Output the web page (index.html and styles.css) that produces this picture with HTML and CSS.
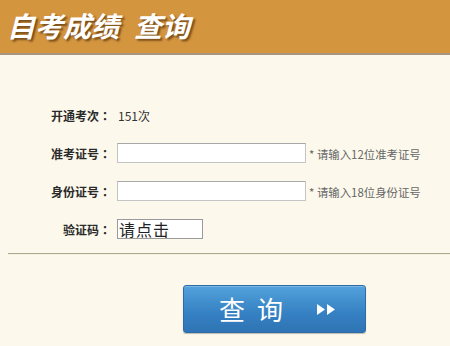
FILE: index.html
```html
<!DOCTYPE html>
<html lang="zh">
<head>
<meta charset="utf-8">
<title>自考成绩 查询</title>
<link rel="stylesheet" href="styles.css">
</head>
<body>
<header class="top">
  <h1 class="title"><span>自考成绩</span><span class="title-b">查询</span></h1>
</header>
<main class="form">
  <div class="row">
    <span class="label">开通考次<span class="colon">：</span></span>
    <span class="value">151次</span>
  </div>
  <div class="row">
    <span class="label">准考证号<span class="colon">：</span></span>
    <input class="field" type="text">
    <span class="hint">* 请输入12位准考证号</span>
  </div>
  <div class="row">
    <span class="label">身份证号<span class="colon">：</span></span>
    <input class="field" type="text">
    <span class="hint">* 请输入18位身份证号</span>
  </div>
  <div class="row">
    <span class="label">验证码<span class="colon">：</span></span>
    <span class="captcha">请点击</span>
  </div>
</main>
<hr class="divider">
<div class="actions">
  <button class="submit" type="button">
    <span class="btn-text">查</span>
    <span class="btn-text">询</span>
    <svg class="arrows" width="19" height="11" viewBox="0 0 19 11"><polygon points="0,0 8,5.5 0,11" fill="#fff"/><polygon points="10,0 18,5.5 10,11" fill="#fff"/></svg>
  </button>
</div>
</body>
</html>
```
FILE: styles.css
```css
html, body {
  margin: 0;
  padding: 0;
}
body {
  background: #fcf9ec;
  font-family: "Noto Sans CJK SC", "Liberation Sans", sans-serif;
  width: 450px;
  height: 346px;
  overflow: hidden;
}
.top {
  box-sizing: border-box;
  height: 55px;
  background: #d4953f;
  border-bottom: 2px solid #a89480;
  display: flex;
  align-items: center;
  padding: 0 0 4px 7px;
}
.title {
  margin: 0;
  font-size: 28px;
  font-weight: 700;
  font-style: italic;
  color: #fff;
  line-height: 1;
  display: flex;
  text-shadow: 2px 2px 2px rgba(60, 30, 0, 0.6);
}
.title-b {
  margin-left: 15px;
}
.form {
  padding-top: 50px;
  display: flex;
  flex-direction: column;
  row-gap: 18px;
}
.row {
  height: 20px;
  display: flex;
  align-items: center;
}
.label {
  width: 111px;
  text-align: right;
  font-size: 12px;
  font-weight: 700;
  color: #2a2a2a;
  margin-right: 6px;
  white-space: nowrap;
}
.colon {
  display: inline-block;
  width: 12px;
  text-align: center;
  font-family: "Noto Sans CJK TC", sans-serif;
}
.value {
  font-size: 12px;
  color: #333;
  margin-left: 1px;
}
.field {
  box-sizing: border-box;
  width: 189px;
  height: 20px;
  margin: 0;
  padding: 0 2px;
  border: 1px solid #c4c4c4;
  border-top-color: #a8a8a8;
  background: #fff;
}
.hint {
  font-size: 12px;
  color: #666;
  margin-left: 3px;
  white-space: nowrap;
  transform: scale(0.95);
  transform-origin: left center;
}
.captcha {
  box-sizing: border-box;
  width: 86px;
  height: 20px;
  border: 1px solid #9a9a9a;
  background: #fff;
  font-size: 16px;
  line-height: 18px;
  color: #222;
  padding-left: 1px;
  letter-spacing: 1px;
}
.divider {
  margin: 14px 0 0 8px;
  height: 0;
  border: none;
  border-top: 1px solid #aaa891;
  border-bottom: 1px solid #f4f1e0;
}
.actions {
  padding-top: 30px;
  padding-left: 183px;
}
.submit {
  box-sizing: border-box;
  width: 183px;
  height: 48px;
  border: 1px solid #2d6ca8;
  border-radius: 3px;
  background: linear-gradient(#53a2dc, #3580c2 60%, #2f74b4);
  box-shadow: inset 0 1px 0 rgba(255,255,255,0.25), 0 1px 1px rgba(0,0,0,0.25);
  display: flex;
  align-items: center;
  padding: 0 0 0 35px;
  margin: 0;
  cursor: pointer;
}
.btn-text {
  font-family: "Noto Sans CJK SC", sans-serif;
  font-size: 26px;
  color: #fff;
  line-height: 1;
  margin-right: 12px;
}
.btn-text + .btn-text {
  margin-right: 34px;
}
.arrows {
  display: block;
}
```
